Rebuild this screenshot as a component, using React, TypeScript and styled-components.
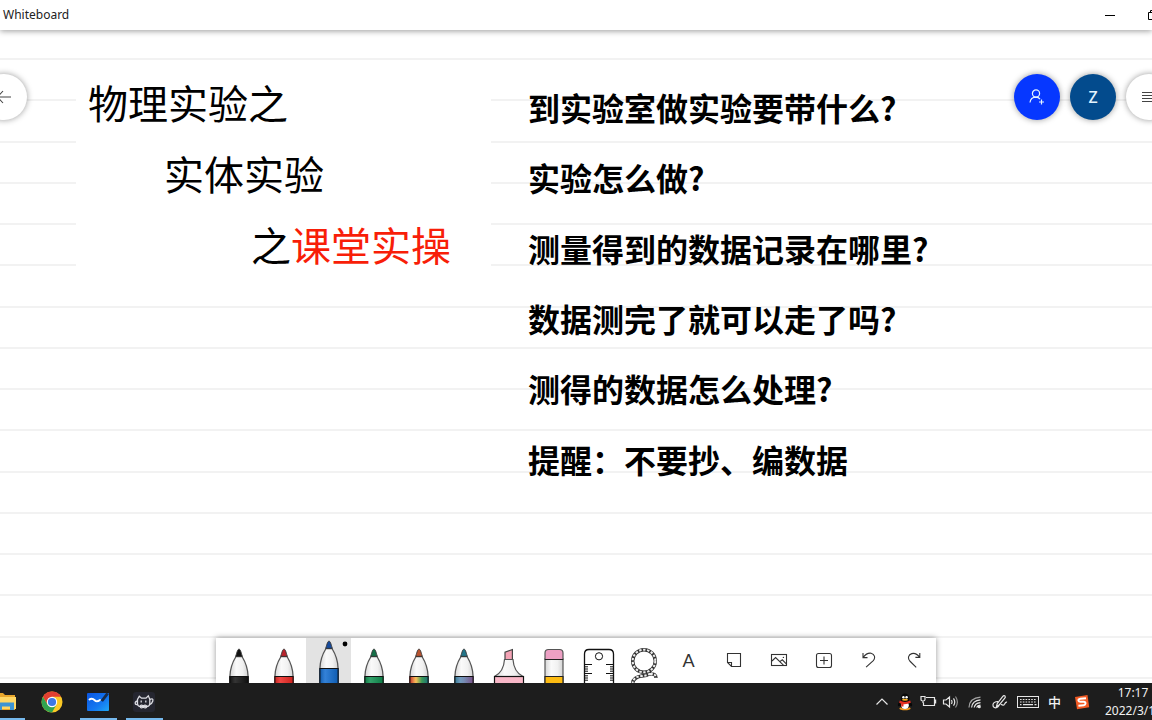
import React from "react";
import styled, { createGlobalStyle } from "styled-components";

const GlobalStyle = createGlobalStyle`
  * { box-sizing: border-box; }
  body { margin: 0; background: #fff; }
  button { border: 0; padding: 0; margin: 0; background: none; font: inherit; color: inherit; cursor: pointer; }
  svg { display: block; }
`;

const uiFont = `"Noto Sans", "Open Sans", "Noto Sans CJK SC", sans-serif`;
const boardFont = `"Noto Sans CJK SC", "Noto Sans", sans-serif`;

const Window = styled.div`
  display: flex;
  flex-direction: column;
  height: 100vh;
  overflow: hidden;
  font-family: ${uiFont};
  color: #000;
`;

const TitleBar = styled.header`
  position: relative;
  z-index: 2;
  display: flex;
  flex: none;
  align-items: center;
  justify-content: space-between;
  height: 30px;
  padding-left: 3px;
  background: #fff;
  box-shadow: 0 1px 6px rgba(0, 0, 0, 0.4);
`;

const AppTitle = styled.h1`
  margin: 0;
  color: #222;
  font-size: 12px;
  font-weight: 400;
  line-height: 30px;
`;

const WindowControls = styled.div`
  display: flex;
  margin-right: -22px;
`;

const WindowButton = styled.button`
  display: grid;
  place-items: center;
  width: 43px;
  height: 30px;
`;

const Board = styled.main`
  position: relative;
  flex: 1;
  min-height: 0;
  background: #fff;
`;

const RuledPaper = styled.div`
  position: absolute;
  inset: 28px 0 4px;
  display: flex;
  flex-direction: column;
  justify-content: space-between;
`;

const Rule = styled.div`
  height: 2px;
  background: #f2f2f2;
`;

const Notes = styled.div`
  position: relative;
  display: flex;
  align-items: flex-start;
  gap: 37px;
  padding: 37px 0 0 76px;
  font-family: ${boardFont};
`;

const TitleNote = styled.section`
  width: 415px;
  height: 204px;
  background: #fff;
`;

const TitleLine = styled.p<{ $indent: number }>`
  margin: 0;
  padding-left: ${(p) => p.$indent}px;
  font-size: 40px;
  line-height: 71px;
  white-space: nowrap;
`;

const Red = styled.span`
  color: #f81e08;
`;

const QuestionNote = styled.ul`
  display: grid;
  grid-auto-rows: 1fr;
  height: 422px;
  margin: 5px 0 0;
  padding: 0;
  list-style: none;
`;

const Question = styled.li`
  display: flex;
  align-items: center;
  font-size: 32px;
  font-weight: 700;
  line-height: 40px;
  white-space: nowrap;
`;

const CornerGroup = styled.div<{ $side: "left" | "right" }>`
  position: absolute;
  top: 44px;
  ${(p) => (p.$side === "left" ? "left: -19px;" : "right: -20px;")}
  display: flex;
  gap: 10px;
`;

const RoundButton = styled.button<{ $bg: string }>`
  display: grid;
  place-items: center;
  width: 46px;
  height: 46px;
  border-radius: 50%;
  background: ${(p) => p.$bg};
  color: ${(p) => (p.$bg === "#fff" ? "#444" : "#e4f4ff")};
  box-shadow: 0 0 6px rgba(0, 0, 0, 0.4);
  font-size: 16px;
  font-weight: 500;
`;

const PenTray = styled.div`
  position: absolute;
  left: 0;
  right: 0;
  bottom: 0;
  display: flex;
  width: max-content;
  margin: 0 auto;
  background: #fff;
  box-shadow: 0 0 6px rgba(0, 0, 0, 0.4);
`;

const ToolButton = styled.button<{ $active?: boolean }>`
  display: grid;
  place-items: center;
  width: 45px;
  height: 45px;
  background: ${(p) => (p.$active ? "#e3e3e3" : "transparent")};
  color: #333;
`;

const LetterTool = styled.span`
  font-family: Lato, sans-serif;
  font-size: 18px;
  font-weight: 400;
  line-height: 45px;
`;

const Taskbar = styled.footer`
  position: relative;
  z-index: 3;
  display: flex;
  flex: none;
  justify-content: space-between;
  height: 37px;
  background: #1d1d1d;
  color: #f2f2f2;
`;

const AppList = styled.nav`
  display: flex;
  margin-left: -17px;
`;

const AppButton = styled.button<{ $running?: boolean }>`
  display: grid;
  place-items: center;
  width: 46px;
  height: 37px;
  background: ${(p) =>
    p.$running
      ? "linear-gradient(#76b9ed, #76b9ed) center bottom / 37px 2px no-repeat"
      : "none"};
`;

const SystemTray = styled.div`
  display: flex;
  align-items: center;
  margin-right: -9px;
`;

const traySizes = { small: 23, medium: 25, large: 31 };

const TrayButton = styled.button<{ $size: keyof typeof traySizes }>`
  display: grid;
  place-items: center;
  width: ${(p) => traySizes[p.$size]}px;
  height: 37px;
  font-size: 13px;
  font-weight: 500;
`;

const Clock = styled.time`
  width: 56px;
  margin-left: 8px;
  font-size: 12px;
  line-height: 18px;
  white-space: nowrap;
`;

const ClockTime = styled.div`
  text-align: center;
`;

type PenProps = { tip: string; band: string; raised?: boolean };

const Pen = ({ tip, band, raised }: PenProps) => (
  <svg width="45" height="45" viewBox="0 0 45 45">
    <g transform={raised ? "translate(0 -8)" : undefined}>
      <path d="M20 18.5C16 25 14 32 13.9 38.5V56H32.1V38.5C32 32 30 25 26 18.5Z" fill="url(#penBody)" stroke="#555" strokeWidth="1.3" />
      <rect x="13.5" y="38.5" width="19" height="18" fill={band} />
      <rect x="13.5" y="38.5" width="19" height="18" fill="url(#shade)" />
      <path d="M13.5 38.5H32.5M13.9 38V56M32.1 38V56" stroke="#111" strokeWidth="1.1" />
      <path d="M23 11.2C21.6 11.2 21.2 13.5 19.7 18.4H26.3C24.8 13.5 24.4 11.2 23 11.2Z" fill={tip} stroke="#333" strokeWidth=".9" />
    </g>
    {raised && <circle cx="39" cy="6" r="2.4" fill="#000" />}
  </svg>
);

const Highlighter = () => (
  <svg width="45" height="45" viewBox="0 0 45 45">
    <path d="M19 21.5V14.2L26.4 11.5V21.5Z" fill="#f4a3b5" stroke="#444" strokeWidth="1.2" />
    <path d="M18.5 21.5H27C27.5 30 30 35 37 38.5H8.5C15.5 35 18 30 18.5 21.5Z" fill="url(#penBody)" stroke="#555" strokeWidth="1.2" />
    <rect x="8.5" y="38.5" width="29" height="10" fill="#f9b8c8" stroke="#111" strokeWidth="1.2" />
  </svg>
);

const Eraser = () => (
  <svg width="45" height="45" viewBox="0 0 45 45">
    <rect x="14" y="21" width="18" height="30" fill="url(#penBody)" stroke="#555" strokeWidth="1.2" />
    <path d="M14 21.5V15Q14 11.5 17.5 11.5H28.5Q32 11.5 32 15V21.5Z" fill="#eda0c4" stroke="#555" strokeWidth="1.2" />
    <path d="M14 38.5H32V50H14Z" fill="#fdbb12" stroke="#222" strokeWidth="1.2" />
    <path d="M14 21.5H32" stroke="#222" />
  </svg>
);

const Ruler = () => (
  <svg width="45" height="45" viewBox="0 0 45 45" fill="none" stroke="#111">
    <path d="M8.5 46V16Q8.5 11.5 13 11.5H33Q37.5 11.5 37.5 16V46" fill="#fff" strokeWidth="1.3" />
    <circle cx="23" cy="18.3" r="3.6" />
    <path d="M8.5 26.5H16M37.5 26.5H30M8.5 35.5H16M37.5 35.5H30" />
    <path d="M8.5 28.8H12M8.5 31H12M8.5 33.2H12M8.5 37.8H12M8.5 40H12M8.5 42.2H12M37.5 28.8H34M37.5 31H34M37.5 33.2H34M37.5 37.8H34M37.5 40H34M37.5 42.2H34" />
  </svg>
);

const Lasso = () => (
  <svg width="45" height="45" viewBox="0 0 45 45" fill="none">
    <g stroke="#333" strokeWidth="3.4">
      <circle cx="23" cy="23" r="11.3" />
      <path d="M11.5 46C12 40 16 38.5 21 38C26 37.5 28 36.5 31 34.5M29 36C33 35.5 35 37 35 40" />
    </g>
    <g stroke="#eee" strokeWidth="2" strokeDasharray="2.4 1.6">
      <circle cx="23" cy="23" r="11.3" />
      <path d="M11.5 46C12 40 16 38.5 21 38C26 37.5 28 36.5 31 34.5M29 36C33 35.5 35 37 35 40" />
    </g>
  </svg>
);

type LineIconProps = { children: React.ReactNode; size?: number; width?: number };

const LineIcon = ({ children, size = 18, width = 1.1 }: LineIconProps) => (
  <svg width={size} height={size} viewBox={`0 0 ${size} ${size}`} fill="none" stroke="currentColor" strokeWidth={width}>
    {children}
  </svg>
);

const NoteIcon = () => (
  <LineIcon>
    <path d="M2.5 1.5H15.5V14.5H6.5L2.5 10.5Z" />
    <path d="M2.5 10.5H6.5V14.5" />
  </LineIcon>
);

const ImageIcon = () => (
  <LineIcon>
    <rect x="1.5" y="2.5" width="15" height="11" />
    <path d="M2 9L5.6 5.5L13.4 13.2M9.8 9.6L12.3 7.8L16.3 11.8" />
    <circle cx="13.4" cy="5.4" r=".7" fill="currentColor" stroke="none" />
  </LineIcon>
);

const AddIcon = () => (
  <LineIcon>
    <rect x="1.5" y="1.5" width="15" height="14" rx="2" />
    <path d="M9 4.5V12.5M5 8.5H13" />
  </LineIcon>
);

const UndoIcon = () => (
  <LineIcon>
    <path d="M3 1V5.6H7.5M3.2 5.4C5.7 2 8.3 .8 11.1 1.2C14.6 1.9 15.7 6 13.3 8.7L6.1 15.2" />
  </LineIcon>
);

const RedoIcon = () => (
  <LineIcon>
    <path d="M14.8 1V5.4H10.4M14.6 5.2C12.2 2 9.6 .8 6.8 1.6C3.3 2.6 2.5 6.4 4.8 9L11.2 15.4" />
  </LineIcon>
);

const ExplorerIcon = () => (
  <svg width="24" height="22" viewBox="0 0 24 22">
    <path d="M2 2H9L11 4H21V19H2Z" fill="#e8a62c" />
    <path d="M2 6H22V18H2Z" fill="#ffd765" />
    <path d="M4 19V11.5H20V19H16V15.5H8V19Z" fill="#3d94d4" />
  </svg>
);

const ChromeIcon = () => (
  <svg width="22" height="22" viewBox="0 0 22 22">
    <circle cx="11" cy="11" r="10.5" fill="#fbc926" />
    <path d="M1.9 5.8A10.5 10.5 0 0 1 20.1 5.8H11L6.5 13.6Z" fill="#e14032" />
    <path d="M1.9 5.8A10.5 10.5 0 0 0 11 21.5L15.5 13.6L11 16L6.5 13.6Z" fill="#31a350" />
    <circle cx="11" cy="11" r="5.2" fill="#fff" />
    <circle cx="11" cy="11" r="4.1" fill="#3c78e6" />
  </svg>
);

const WhiteboardIcon = () => (
  <svg width="24" height="22" viewBox="0 0 24 22">
    <rect x="1" y="2" width="22" height="18" rx="1" fill="url(#boardBlue)" />
    <path d="M3.5 8.5C6 6.5 7.5 8 9 9.5C10.5 11 12 10.5 14 9" fill="none" stroke="#fff" strokeWidth="2" strokeLinecap="round" />
    <path d="M14.5 9.5L20.5 1.5L22.8 3.2L17 10.8Z" fill="#182c4a" />
  </svg>
);

const CatIcon = () => (
  <svg width="24" height="22" viewBox="0 0 24 22">
    <rect x="1" y="1" width="22" height="20" rx="3" fill="#252630" />
    <g fill="none" stroke="#dcdce2" strokeWidth="1.3">
      <path d="M5.5 13V8.5L7.3 5.3L9.5 7.2H14L16.3 4.8L17.8 8.3V13Q17.5 15.5 14.5 15.5H8.5Q5.8 15.5 5.5 13Z" />
      <path d="M17.8 8.3Q21.6 6.8 20.8 10Q20 13 17.4 13.6M5.5 10Q2.3 10.8 3.5 13.2L5.8 14M9.2 9.6V11.6M13.8 9.4V11.4" />
      <path d="M8 15.5Q9 13.2 11.2 15Q13.4 13.2 15 15.3M8.2 15.5Q8.6 17.8 11.2 16.2Q14 17.8 14.8 15.5" />
    </g>
  </svg>
);

const PenguinIcon = () => (
  <svg width="16" height="18" viewBox="0 0 16 18">
    <ellipse cx="8" cy="15.5" rx="5.6" ry="1.8" fill="#f29a1c" />
    <path d="M2 9Q0 12 1.5 13.5L4 12ZM14 9Q16 12 14.5 13.5L12 12Z" fill="#080808" />
    <ellipse cx="8" cy="11" rx="5.3" ry="5" fill="#0a0a0a" />
    <ellipse cx="8" cy="12.3" rx="3.8" ry="3.6" fill="#fff" />
    <ellipse cx="8" cy="5.3" rx="4.3" ry="4.7" fill="#0a0a0a" />
    <circle cx="6.4" cy="4.2" r="1.2" fill="#fff" />
    <circle cx="9.6" cy="4.2" r="1.2" fill="#fff" />
    <ellipse cx="8" cy="6.7" rx="3" ry="1" fill="#f6b01e" />
    <path d="M2.8 7.6Q8 10.4 13.2 7.6L13.8 9.8Q10 11.5 6.5 11.2V13.4H4.2V10.8L2.2 9.8Z" fill="#e42e20" />
  </svg>
);

const TraySvg = ({ children, width = 18 }: { children: React.ReactNode; width?: number }) => (
  <svg width={width} height="18" viewBox={`0 0 ${width} 18`} fill="none" stroke="#e6e6e6" strokeWidth="1.2">
    {children}
  </svg>
);

const SogouIcon = () => (
  <svg width="16" height="16" viewBox="0 0 16 16">
    <path d="M1 3L13.5 1L15.2 13.2L3 15.3Z" fill="#f15a24" />
    <path d="M12 4.2L6.3 4.8Q4 5.2 4.5 6.8Q4.8 7.8 6.5 7.8L9.8 7.7Q11.6 7.8 11.5 9.5Q11.4 11 9.8 11.2L4.4 11.8" fill="none" stroke="#fff" strokeWidth="2" />
  </svg>
);

const GradientDefs = styled.svg`
  position: absolute;
`;

const SharedGradients = () => (
  <GradientDefs width="0" height="0" aria-hidden="true">
    <defs>
      <linearGradient id="penBody">
        <stop offset="0" stopColor="#d6d6d6" />
        <stop offset=".35" stopColor="#fafafa" />
        <stop offset=".7" stopColor="#f1f1f1" />
        <stop offset="1" stopColor="#d2d2d2" />
      </linearGradient>
      <linearGradient id="shade">
        <stop offset="0" stopColor="#000" stopOpacity=".2" />
        <stop offset=".3" stopColor="#fff" stopOpacity=".15" />
        <stop offset="1" stopColor="#000" stopOpacity=".15" />
      </linearGradient>
      <linearGradient id="rainbow">
        <stop offset="0" stopColor="#e8322c" />
        <stop offset=".35" stopColor="#f6b73c" />
        <stop offset=".65" stopColor="#2f9e4f" />
        <stop offset="1" stopColor="#1c7f8c" />
      </linearGradient>
      <linearGradient id="galaxy">
        <stop offset="0" stopColor="#3b8fb0" />
        <stop offset=".5" stopColor="#6c86b4" />
        <stop offset="1" stopColor="#8d5c9c" />
      </linearGradient>
      <linearGradient id="boardBlue" x1="0" y1="0" x2="1" y2="1">
        <stop offset="0" stopColor="#0b55e0" />
        <stop offset=".6" stopColor="#1478f0" />
        <stop offset="1" stopColor="#20a8f4" />
      </linearGradient>
    </defs>
  </GradientDefs>
);

const rules = Array.from({ length: 16 }, (_, i) => i);

const questions = [
  "到实验室做实验要带什么?",
  "实验怎么做?",
  "测量得到的数据记录在哪里?",
  "数据测完了就可以走了吗?",
  "测得的数据怎么处理?",
  "提醒：不要抄、编数据",
];

const tools: { label: string; icon: React.ReactNode; active?: boolean }[] = [
  { label: "Black pen", icon: <Pen tip="#111" band="#111" /> },
  { label: "Red pen", icon: <Pen tip="#b8232c" band="#ee2722" /> },
  { label: "Blue pen", icon: <Pen tip="#164a9c" band="#0f6bd0" raised />, active: true },
  { label: "Green pen", icon: <Pen tip="#157048" band="#0f9150" /> },
  { label: "Rainbow pen", icon: <Pen tip="#b9532f" band="url(#rainbow)" /> },
  { label: "Galaxy pen", icon: <Pen tip="#227589" band="url(#galaxy)" /> },
  { label: "Highlighter", icon: <Highlighter /> },
  { label: "Eraser", icon: <Eraser /> },
  { label: "Ruler", icon: <Ruler /> },
  { label: "Lasso select", icon: <Lasso /> },
  { label: "Text", icon: <LetterTool>A</LetterTool> },
  { label: "Note", icon: <NoteIcon /> },
  { label: "Image", icon: <ImageIcon /> },
  { label: "Insert", icon: <AddIcon /> },
  { label: "Undo", icon: <UndoIcon /> },
  { label: "Redo", icon: <RedoIcon /> },
];

const apps = [
  { label: "File Explorer", icon: <ExplorerIcon />, running: true },
  { label: "Chrome", icon: <ChromeIcon />, running: false },
  { label: "Whiteboard", icon: <WhiteboardIcon />, running: true },
  { label: "Desktop pet", icon: <CatIcon />, running: true },
];

const trayItems: { label: string; size: keyof typeof traySizes; icon: React.ReactNode }[] = [
  { label: "Show hidden icons", size: "small", icon: <TraySvg><path d="M3.5 11.5L9 6L14.5 11.5" /></TraySvg> },
  { label: "QQ", size: "small", icon: <PenguinIcon /> },
  {
    label: "Battery",
    size: "small",
    icon: (
      <TraySvg>
        <path d="M7 4.5H15.5V12.5H4.5V9.5M16.6 6.5V10.5" />
        <path d="M2 3.5H6V6.5Q6 8 4 8Q2 8 2 6.5ZM4 8V10" />
      </TraySvg>
    ),
  },
  {
    label: "Volume",
    size: "small",
    icon: (
      <TraySvg>
        <path d="M1.5 7H4L7.5 4V14L4 11H1.5ZM9.5 7Q10.7 9 9.5 11" />
        <path d="M11.5 5.3Q14 9 11.5 12.7" />
        <path d="M13.5 3.5Q17.3 9 13.5 14.5" stroke="#909090" />
      </TraySvg>
    ),
  },
  {
    label: "Network",
    size: "medium",
    icon: (
      <TraySvg>
        <path d="M3 14.5Q3.5 5 14.5 4.2" stroke="#a5a5a5" />
        <path d="M5.6 14.5Q6.3 7.6 14.5 6.9M8.2 14.5Q9 10.1 14.5 9.6M10.6 14.5Q11.4 12.4 14.5 12.1" />
        <circle cx="13.3" cy="13.7" r=".9" fill="#e6e6e6" />
      </TraySvg>
    ),
  },
  {
    label: "Windows Ink",
    size: "medium",
    icon: (
      <TraySvg>
        <path d="M6.2 10.7L11.8 3.3Q13 2 14 3Q14.8 4 13.8 5.2L8 12.2L5.6 13.1ZM7 8.5Q2.5 8.5 2 11.5Q1.8 14.8 4.5 14.8Q7.5 14.5 8.2 11.7M10 11.3Q12.5 13 13.5 11.2Q14.6 8.8 16 9.2" />
      </TraySvg>
    ),
  },
  {
    label: "Touch keyboard",
    size: "large",
    icon: (
      <TraySvg width={24}>
        <rect x="1.5" y="3.5" width="21" height="11" strokeWidth="1" />
        <path d="M4 6.5H20.5M4 9H20.5" strokeDasharray="1.6 1.2" />
        <path d="M4 11.7H5.5M7 11.7H17M18.5 11.7H20.5" />
      </TraySvg>
    ),
  },
  { label: "Input language", size: "small", icon: "中" },
  { label: "Sogou input", size: "large", icon: <SogouIcon /> },
];

export default function App() {
  return (
    <Window>
      <GlobalStyle />
      <SharedGradients />
      <TitleBar>
        <AppTitle>Whiteboard</AppTitle>
        <WindowControls>
          <WindowButton aria-label="Minimize">
            <LineIcon size={10} width={1}>
              <path d="M0 5.5H10" />
            </LineIcon>
          </WindowButton>
          <WindowButton aria-label="Restore">
            <LineIcon size={10} width={1}>
              <path d="M.5 2.5H7.5V9.5H.5ZM2.5 2.5V.5H9.5V7.5H7.5" />
            </LineIcon>
          </WindowButton>
        </WindowControls>
      </TitleBar>

      <Board>
        <RuledPaper>
          {rules.map((i) => (
            <Rule key={i} />
          ))}
        </RuledPaper>

        <Notes>
          <TitleNote>
            <TitleLine $indent={12}>物理实验之</TitleLine>
            <TitleLine $indent={88}>实体实验</TitleLine>
            <TitleLine $indent={175}>
              之<Red>课堂实操</Red>
            </TitleLine>
          </TitleNote>
          <QuestionNote>
            {questions.map((q) => (
              <Question key={q}>{q}</Question>
            ))}
          </QuestionNote>
        </Notes>

        <CornerGroup $side="left">
          <RoundButton $bg="#fff" aria-label="Back">
            <LineIcon>
              <path d="M16 9H3M8 3L2.5 9L8 15" />
            </LineIcon>
          </RoundButton>
        </CornerGroup>
        <CornerGroup $side="right">
          <RoundButton $bg="#0637ff" aria-label="Invite someone">
            <LineIcon width={1.2}>
              <circle cx="8" cy="5.5" r="3.6" />
              <path d="M2 14.5Q2.5 9.2 8 9.1Q10.5 9.2 12 11M13.5 11.5V16.5M11 14H16" />
            </LineIcon>
          </RoundButton>
          <RoundButton $bg="#034b8d" aria-label="Account">
            Z
          </RoundButton>
          <RoundButton $bg="#fff" aria-label="Settings">
            <LineIcon>
              <path d="M2 4.5H16M2 7.5H16M2 10.5H16M2 13.5H16" />
            </LineIcon>
          </RoundButton>
        </CornerGroup>

        <PenTray role="toolbar" aria-label="Drawing tools">
          {tools.map((t) => (
            <ToolButton key={t.label} aria-label={t.label} $active={t.active}>
              {t.icon}
            </ToolButton>
          ))}
        </PenTray>
      </Board>

      <Taskbar>
        <AppList>
          {apps.map((a) => (
            <AppButton key={a.label} aria-label={a.label} $running={a.running}>
              {a.icon}
            </AppButton>
          ))}
        </AppList>
        <SystemTray>
          {trayItems.map((t) => (
            <TrayButton key={t.label} aria-label={t.label} $size={t.size}>
              {t.icon}
            </TrayButton>
          ))}
          <Clock>
            <ClockTime>17:17</ClockTime>
            <div>2022/3/1</div>
          </Clock>
        </SystemTray>
      </Taskbar>
    </Window>
  );
}
